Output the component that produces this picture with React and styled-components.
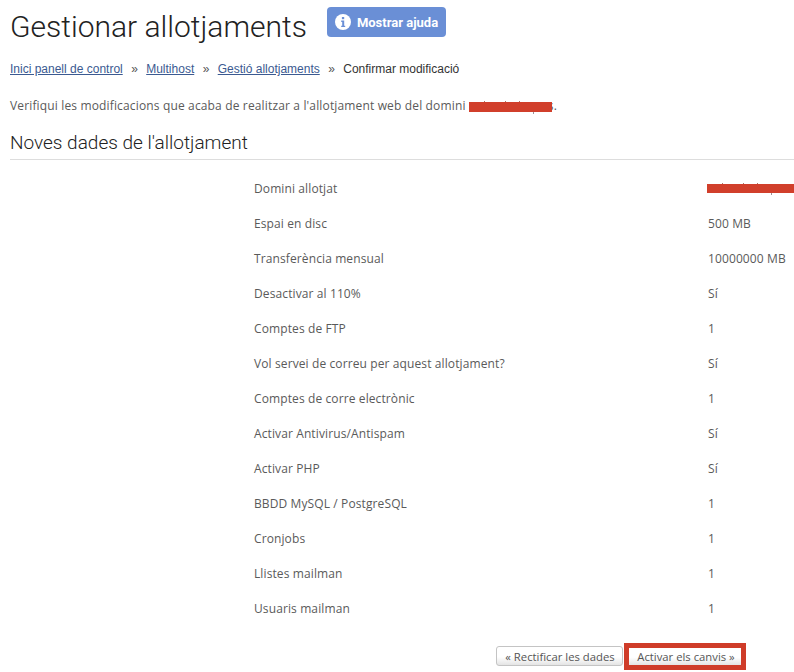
import React from "react";
import styled, { createGlobalStyle } from "styled-components";

const rows = [
  ["Domini allotjat", null],
  ["Espai en disc", "500 MB"],
  ["Transferència mensual", "10000000 MB"],
  ["Desactivar al 110%", "Sí"],
  ["Comptes de FTP", "1"],
  ["Vol servei de correu per aquest allotjament?", "Sí"],
  ["Comptes de corre electrònic", "1"],
  ["Activar Antivirus/Antispam", "Sí"],
  ["Activar PHP", "Sí"],
  ["BBDD MySQL / PostgreSQL", "1"],
  ["Cronjobs", "1"],
  ["Llistes mailman", "1"],
  ["Usuaris mailman", "1"],
];

export default function App() {
  return (
    <Page>
      <GlobalStyle />
      <Header>
        <Title>Gestionar allotjaments</Title>
        <HelpButton>
          <InfoIcon viewBox="0 0 16 16">
            <circle cx="8" cy="8" r="8" fill="#fff" />
            <rect x="6.9" y="3" width="2.3" height="2.2" fill="#6a8fd6" />
            <path d="M6.2 6.6h3v5.2h1v1.3H6.2v-1.3h1v-3.9h-1z" fill="#6a8fd6" />
          </InfoIcon>
          Mostrar ajuda
        </HelpButton>
      </Header>
      <Breadcrumb>
        <Crumb href="#">Inici panell de control</Crumb>
        <Sep>»</Sep>
        <Crumb href="#">Multihost</Crumb>
        <Sep>»</Sep>
        <Crumb href="#">Gestió allotjaments</Crumb>
        <Sep>»</Sep>
        <span>Confirmar modificació</span>
      </Breadcrumb>
      <Intro>
        Verifiqui les modificacions que acaba de realitzar a l'allotjament web del domini{" "}
        <InlineRedaction $width={83} $height={10} />s.
      </Intro>
      <Subtitle>Noves dades de l'allotjament</Subtitle>
      <DataList>
        {rows.map(([label, value]) => (
          <Row key={label}>
            <span>{label}</span>
            {value ? <span>{value}</span> : <CellRedaction $width={87} $height={9} />}
          </Row>
        ))}
      </DataList>
      <Actions>
        <FormButton>« Rectificar les dades</FormButton>
        <Highlight>
          <FormButton $plain>Activar els canvis »</FormButton>
        </Highlight>
      </Actions>
    </Page>
  );
}

const GlobalStyle = createGlobalStyle`
  html, body {
    margin: 0;
    background: #fff;
    overflow: hidden;
  }
`;

const Page = styled.div`
  width: 794px;
  height: 672px;
  overflow: hidden;
  box-sizing: border-box;
  padding: 7px 0 0 10px;
  font-family: "Open Sans", sans-serif;
  font-size: 12px;
  letter-spacing: 0.11px;
  color: #5a5a5a;
`;

const Header = styled.div`
  display: flex;
  align-items: flex-start;
  gap: 20px;
  height: 46px;
`;

const Title = styled.h1`
  margin: 0;
  font-family: Roboto, sans-serif;
  font-weight: 300;
  font-size: 30px;
  line-height: 40px;
  letter-spacing: 0;
  color: #222;
`;

const HelpButton = styled.button`
  display: flex;
  align-items: center;
  gap: 6px;
  width: 119px;
  height: 30px;
  margin: 0;
  padding: 0 0 0 8px;
  border: 0;
  border-radius: 4px;
  background: #6a8fd6;
  color: #fff;
  font-family: Roboto, sans-serif;
  font-weight: 700;
  font-size: 13px;
`;

const InfoIcon = styled.svg`
  width: 16px;
  height: 16px;
  flex: none;
`;

const Breadcrumb = styled.div`
  display: flex;
  align-items: center;
  height: 16px;
  margin-top: 8px;
  font-family: "Liberation Sans", Arial, sans-serif;
  font-size: 12px;
  letter-spacing: 0;
  color: #333;
`;

const Crumb = styled.a`
  color: #3b5a91;
  text-decoration: underline;
`;

const Sep = styled.span`
  margin: 0 8.4px;
  color: #555;
`;

const Intro = styled.p`
  margin: 20px 0 0;
  line-height: 17px;
  letter-spacing: 0.15px;
  white-space: nowrap;
`;

// the marker leaves a few strokes of the covered text visible at its edges
const Redaction = styled.span`
  display: inline-block;
  position: relative;
  width: ${(p) => p.$width}px;
  height: ${(p) => p.$height}px;
  background: #d13f2b;
  vertical-align: -2px;

  &::before {
    content: "";
    position: absolute;
    top: -1px;
    left: 15px;
    width: 1px;
    height: 1px;
    background: #a9776c;
    box-shadow:
      21px 0 #a9776c,
      35px 0 #a9776c;
  }

  &::after {
    content: "";
    position: absolute;
    top: 100%;
    left: 64px;
    width: 1px;
    height: 2px;
    background: #9a8f96;
  }
`;

const InlineRedaction = styled(Redaction)`
  margin-right: -4px;
`;

const CellRedaction = styled(Redaction)`
  margin-left: -1px;
`;

const Subtitle = styled.h2`
  margin: 16px 0 0;
  padding-bottom: 3px;
  border-bottom: 1px solid #ddd;
  font-family: Roboto, sans-serif;
  font-weight: 300;
  font-size: 19px;
  line-height: 26px;
  letter-spacing: 0;
  color: #222;
`;

const DataList = styled.div`
  margin: 11px 0 0 244px;
`;

const Row = styled.div`
  display: grid;
  grid-template-columns: 454px 90px;
  align-items: center;
  height: 35px;
`;

const Actions = styled.div`
  display: flex;
  align-items: center;
  height: 28px;
  margin: 16px 0 0 486px;
  gap: 1px;
`;

const Highlight = styled.div`
  display: flex;
  border: 5px solid #cf3c29;
`;

const FormButton = styled.button`
  width: ${(p) => (p.$plain ? "112px" : "127px")};
  height: ${(p) => (p.$plain ? "17px" : "20px")};
  margin: 0;
  padding: ${(p) => (p.$plain ? "0 0 0 2px" : "0 0 0 1px")};
  border: ${(p) => (p.$plain ? "0" : "1px solid #c4c4c4")};
  border-radius: ${(p) => (p.$plain ? "0" : "3px")};
  background: linear-gradient(#fff 55%, #e4e4e4);
  font-family: "Open Sans", sans-serif;
  font-size: 11.3px;
  color: #555;
`;
